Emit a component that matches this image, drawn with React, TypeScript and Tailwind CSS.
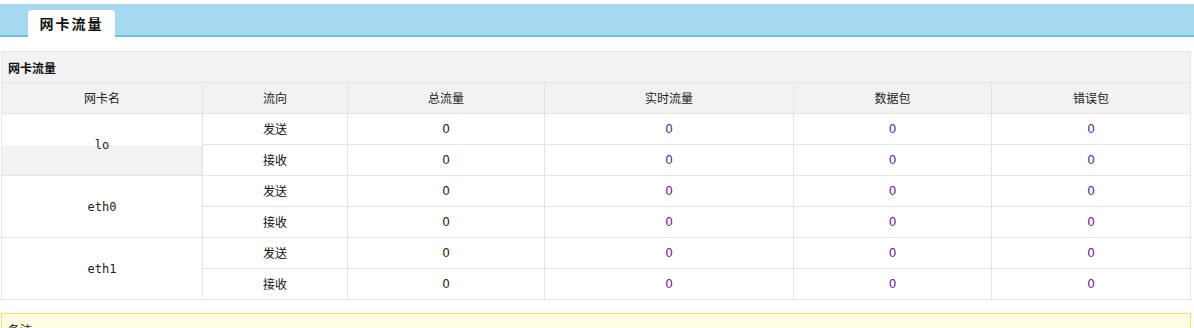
import React from 'react';

type Iface = { name: string; rows: { dir: string; total: string; rate: string; pkts: string; errs: string }[] };

const ifaces: Iface[] = [
  { name: 'lo', rows: [
    { dir: '发送', total: '0', rate: '0', pkts: '0', errs: '0' },
    { dir: '接收', total: '0', rate: '0', pkts: '0', errs: '0' },
  ] },
  { name: 'eth0', rows: [
    { dir: '发送', total: '0', rate: '0', pkts: '0', errs: '0' },
    { dir: '接收', total: '0', rate: '0', pkts: '0', errs: '0' },
  ] },
  { name: 'eth1', rows: [
    { dir: '发送', total: '0', rate: '0', pkts: '0', errs: '0' },
    { dir: '接收', total: '0', rate: '0', pkts: '0', errs: '0' },
  ] },
];

const headers = ['网卡名', '流向', '总流量', '实时流量', '数据包', '错误包'];
const widths = ['w-[201px]', 'w-[145px]', 'w-[197px]', 'w-[249px]', 'w-[198px]', 'w-[199px]'];

export default function App() {
  return (
    <div className="min-h-[328px] bg-white pt-[4px] text-[12px] text-[#333] font-['Noto_Sans_CJK_SC','Noto_Sans',sans-serif]">
      {/* tab bar */}
      <div className="flex h-[33px] items-end border-b-2 border-[#6dbde3] bg-[#a6d9ef] pl-[28px]">
        <div className="mb-[-2px] flex h-[27px] w-[87px] items-center justify-center rounded-t-[4px] bg-white text-[14px] font-bold tracking-[2px] text-[#111]">
          网卡流量
        </div>
      </div>

      <div className="mt-[14px] ml-[1px] w-[1190px]">
        <table className="w-full table-fixed border-collapse border border-[#e2e4e8]">
          <colgroup>
            {widths.map((w, i) => (
              <col key={i} className={w} />
            ))}
          </colgroup>
          <thead>
            <tr className="h-[31px] bg-[#f2f2f3]">
              <th colSpan={6} className="border border-[#e2e4e8] pl-[6px] pt-[2px] text-left font-bold text-[#111]">
                网卡流量
              </th>
            </tr>
            <tr className="h-[31px] bg-[#f2f2f3]">
              {headers.map((h) => (
                <th key={h} className="border border-[#e2e4e8] text-center font-normal text-[#222]">
                  {h}
                </th>
              ))}
            </tr>
          </thead>
          <tbody>
            {ifaces.map((iface, gi) =>
              iface.rows.map((r, ri) => (
                <tr key={iface.name + ri} className="h-[31px]">
                  {ri === 0 && (
                    <td
                      rowSpan={2}
                      className={
                        gi === 0
                          ? "border border-[#e2e4e8] p-0 text-center font-['DejaVu_Sans_Mono',monospace] text-[12px] text-[#222] bg-[linear-gradient(to_bottom,#ffffff_50%,#f2f2f2_50%)]"
                          : "border border-[#e2e4e8] p-0 text-center font-['DejaVu_Sans_Mono',monospace] text-[12px] text-[#222] bg-white"
                      }
                    >
                      {iface.name}
                    </td>
                  )}
                  <td className="border border-[#e2e4e8] text-center text-[#111]">{r.dir}</td>
                  <td className="border border-[#e2e4e8] text-center font-['DejaVu_Sans',sans-serif] text-[#222]">{r.total}</td>
                  <td className="border border-[#e2e4e8] text-center font-['DejaVu_Sans',sans-serif] text-[#6a1b8a]">{r.rate}</td>
                  <td className="border border-[#e2e4e8] text-center font-['DejaVu_Sans',sans-serif] text-[#6a1b8a]">{r.pkts}</td>
                  <td className="border border-[#e2e4e8] text-center font-['DejaVu_Sans',sans-serif] text-[#6a1b8a]">{r.errs}</td>
                </tr>
              ))
            )}
          </tbody>
        </table>

        <div className="mt-[13px] h-[40px] border border-[#ffdb66] bg-[#fffde1] px-[6px] pt-[7px] text-[#111]">
          备注
        </div>
      </div>
    </div>
  );
}
